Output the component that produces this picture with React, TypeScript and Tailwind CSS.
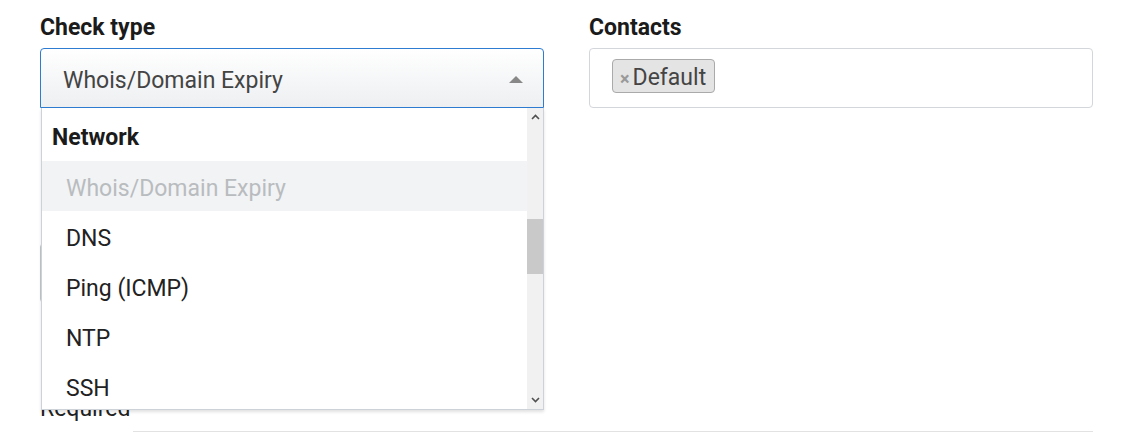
import React from "react";

const options = ["Whois/Domain Expiry", "DNS", "Ping (ICMP)", "NTP", "SSH"];

function Chevron({ up }: { up?: boolean }) {
	return (
		<svg width="9" height="6" viewBox="0 0 9 6" className="block">
			<polyline
				points={up ? "1,5 4.5,1.5 8,5" : "1,1 4.5,4.5 8,1"}
				fill="none"
				stroke="#505050"
				strokeWidth="1.6"
			/>
		</svg>
	);
}

function CheckTypeSelect() {
	return (
		<div className="relative h-[60px] w-[504px]">
			<div className="flex h-full items-center rounded-t-[4px] border border-[#2d7cd2] bg-gradient-to-b from-white to-[#edeff1] pl-[22px] pt-[7px] text-[23px] text-[#444]">
				Whois/Domain Expiry
				<span className="absolute right-[21px] top-[28px] h-0 w-0 border-x-[7px] border-b-[7px] border-x-transparent border-b-[#888]" />
			</div>

			<div className="absolute left-[1px] top-full z-10 flex h-[302px] w-[503px] border border-t-0 border-[#cdd2d8] bg-white shadow-[0_2px_3px_rgba(0,0,0,0.12)]">
				<div className="flex-1 overflow-hidden">
					<div className="flex h-[53px] items-center pl-[10px] pt-[7px] text-[23px] font-bold text-[#1b1b1b]">
						Network
					</div>
					{options.map((o, i) => (
						<div
							key={o}
							className={
								i === 0
									? "flex h-[50px] items-center bg-[#f2f3f5] pl-[24px] pt-[7px] text-[23px] text-[#b9bcbf]"
									: "flex h-[50px] items-center pl-[24px] pt-[7px] text-[23px] text-[#222]"
							}>
							{o}
						</div>
					))}
				</div>
				<div className="flex w-[16px] flex-col bg-[#f1f1f1]">
					<div className="flex h-[16px] items-center justify-center pt-[2px]">
						<Chevron up />
					</div>
					<div className="h-[95px]" />
					<div className="h-[55px] bg-[#c9c9c9]" />
					<div className="flex-1" />
					<div className="flex h-[16px] items-center justify-center pb-[2px]">
						<Chevron />
					</div>
				</div>
			</div>
		</div>
	);
}

export default function App() {
	return (
		<div
			className="h-[432px] overflow-hidden bg-white px-[40px] pt-[14px] text-[#222]"
			style={{ fontFamily: "Roboto, 'Liberation Sans', sans-serif" }}>
			<div className="grid grid-cols-[504px_504px] gap-x-[45px]">
				<div>
					<label className="mb-[7px] block h-[27px] text-[23px] font-bold leading-[27px] text-[#1b1b1b]">
						Check type
					</label>
					<CheckTypeSelect />
					<div className="mt-[135px] h-[60px] w-[504px] rounded-[4px] border border-[#c4c8cd]" />
					<div className="mt-[92px] h-[27px] text-[23px] leading-[27px] text-[#222]">
						Required
					</div>
				</div>

				<div>
					<label className="mb-[7px] block h-[27px] text-[23px] font-bold leading-[27px] text-[#1b1b1b]">
						Contacts
					</label>
					<div className="h-[60px] rounded-[4px] border border-[#d3d6da] bg-white pl-[22px] pt-[10px]">
						<span className="inline-flex h-[34px] items-center rounded-[4px] border border-[#aaa] bg-[#e4e4e4] pl-[7px] pr-[8px] pt-[4px] text-[23px] text-[#444]">
							<span className="mr-[3px] text-[18px] font-bold text-[#999]">×</span>
							Default
						</span>
					</div>
				</div>
			</div>
			<div className="ml-[93px] mt-[9px] w-[960px] border-t-2 border-[#e2e2e2]" />
		</div>
	);
}
